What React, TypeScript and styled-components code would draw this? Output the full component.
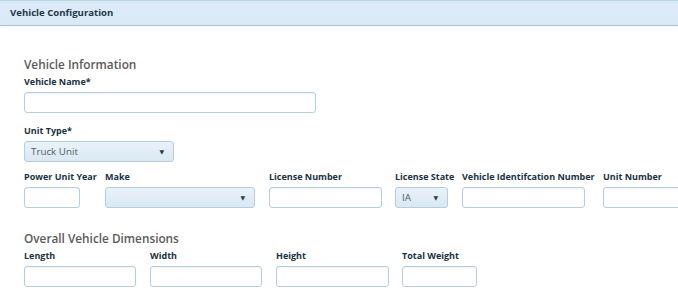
import React from "react";
import styled, { createGlobalStyle } from "styled-components";

const GlobalStyle = createGlobalStyle`
  html, body {
    margin: 0;
    padding: 0;
    background: #ffffff;
    overflow: hidden;
  }
  body {
    font-family: "Open Sans", "DejaVu Sans", sans-serif;
  }
`;

type FieldDef = {
  label: string;
  col: number;
  w: number;
  kind?: "input" | "select";
  value?: string;
};

const detailRow: FieldDef[] = [
  { label: "Power Unit Year", col: 81, w: 56 },
  { label: "Make", col: 164, w: 150, kind: "select" },
  { label: "License Number", col: 126, w: 113 },
  { label: "License State", col: 67, w: 53, kind: "select", value: "IA" },
  { label: "Vehicle Identifcation Number", col: 141, w: 123 },
  { label: "Unit Number", col: 120, w: 80 },
];

const dimensionRow: FieldDef[] = [
  { label: "Length", col: 126, w: 112 },
  { label: "Width", col: 126, w: 112 },
  { label: "Height", col: 126, w: 113 },
  { label: "Total Weight", col: 126, w: 75 },
];

function Control({ kind, w, value }: { kind?: string; w: number; value?: string }) {
  if (kind === "select") {
    return (
      <Select $w={w}>
        <span>{value}</span>
        <Arrow>▼</Arrow>
      </Select>
    );
  }
  return <Input $w={w} />;
}

function FieldRow({ fields }: { fields: FieldDef[] }) {
  return (
    <Row>
      {fields.map((f) => (
        <Field key={f.label} $col={f.col}>
          <Label>{f.label}</Label>
          <Control kind={f.kind} w={f.w} value={f.value} />
        </Field>
      ))}
    </Row>
  );
}

export default function App() {
  return (
    <Page>
      <GlobalStyle />
      <Header>Vehicle Configuration</Header>
      <Body>
        <Heading>Vehicle Information</Heading>
        <Field $col={300}>
          <Label>Vehicle Name*</Label>
          <Input $w={292} />
        </Field>
        <Field $col={160} $top={11}>
          <Label>Unit Type*</Label>
          <Select $w={150}>
            <span>Truck Unit</span>
            <Arrow>▼</Arrow>
          </Select>
        </Field>
        <Spacer $h={8} />
        <FieldRow fields={detailRow} />
        <Heading $top={22}>Overall Vehicle Dimensions</Heading>
        <FieldRow fields={dimensionRow} />
      </Body>
    </Page>
  );
}

const Page = styled.div`
  width: 678px;
  height: 291px;
  overflow: hidden;
`;

const Header = styled.div`
  height: 24px;
  line-height: 24px;
  padding-left: 10px;
  background: linear-gradient(#d3e6f2 0, #dcebf7 3px, #dae9f6 100%);
  border-top: 1px solid #b9d5e2;
  border-bottom: 1px solid #a9c6d3;
  box-shadow: 0 2px 4px rgba(0, 0, 0, 0.03);
  font-size: 9.6px;
  font-weight: 700;
  color: #1d384a;
`;

const Body = styled.div`
  padding: 30px 0 0 24px;
  display: flex;
  flex-direction: column;
  align-items: flex-start;
`;

const Heading = styled.div<{ $top?: number }>`
  margin-top: ${(p) => p.$top ?? 0}px;
  font-size: 11.8px;
  line-height: 16px;
  font-weight: 600;
  color: #5a5a5a;
  margin-bottom: 3px;
`;

const Spacer = styled.div<{ $h: number }>`
  height: ${(p) => p.$h}px;
`;

const Row = styled.div`
  display: flex;
  flex-wrap: nowrap;
`;

const Field = styled.div<{ $col: number; $top?: number }>`
  flex: none;
  width: ${(p) => p.$col}px;
  margin-top: ${(p) => p.$top ?? 0}px;
  display: flex;
  flex-direction: column;
`;

const Label = styled.div`
  font-size: 9px;
  line-height: 14px;
  font-weight: 700;
  color: #183242;
  white-space: nowrap;
  margin-bottom: 3px;
`;

const Input = styled.div<{ $w: number }>`
  box-sizing: border-box;
  width: ${(p) => p.$w}px;
  height: 21px;
  border: 1px solid #b3cfdd;
  border-radius: 3px;
  background: #ffffff;
  box-shadow: inset 0 1px 1px rgba(120, 160, 180, 0.12);
`;

const Select = styled.div<{ $w: number }>`
  box-sizing: border-box;
  width: ${(p) => p.$w}px;
  height: 21px;
  border: 1px solid #b3cfdd;
  border-radius: 3px;
  background: linear-gradient(#e9f2f9, #d9e8f3);
  display: flex;
  align-items: center;
  justify-content: space-between;
  padding: 0 9px 0 6px;
  font-size: 9.8px;
  color: #4f5d66;
`;

const Arrow = styled.span`
  font-size: 6px;
  color: #2a3a44;
`;
